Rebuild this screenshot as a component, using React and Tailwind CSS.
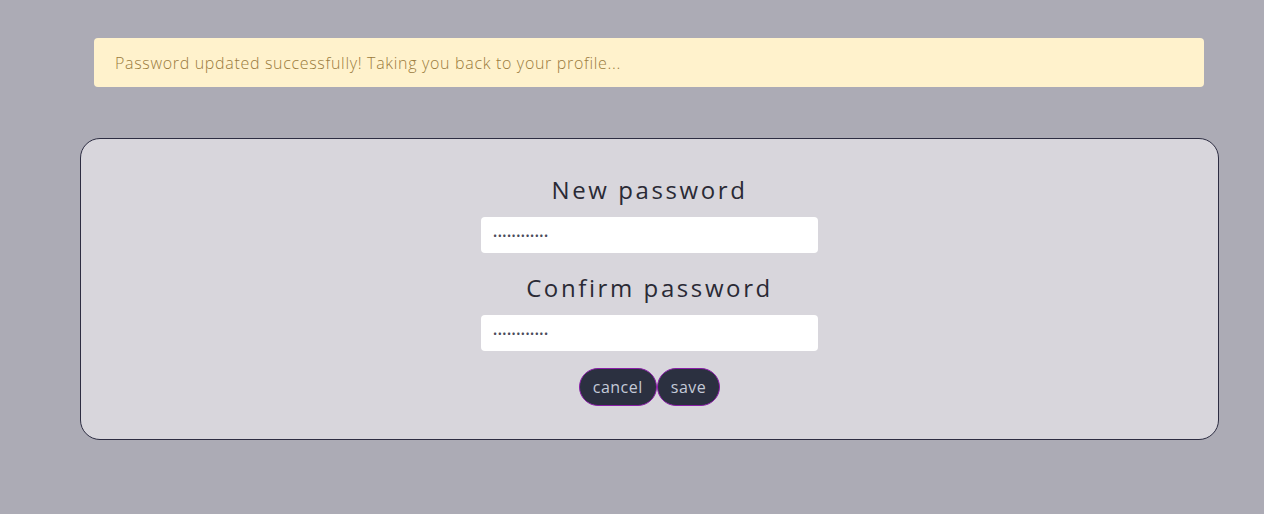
import React, { useState } from "react";

export default function App() {
  const [pw, setPw] = useState("123456789012");
  const [confirm, setConfirm] = useState("123456789012");

  return (
    <div className="min-h-[514px] bg-[#acabb5] pt-[38px] font-['Open_Sans',sans-serif]">
      {/* Alert */}
      <div className="mx-[94px] w-[1110px] h-[49px] rounded-[4px] bg-[#fff2cc] flex items-center px-[21px] text-[16px] font-light tracking-[0.68px] text-[#9a7b3c]">
        Password updated successfully! Taking you back to your profile...
      </div>

      {/* Card */}
      <div className="ml-[80px] mt-[51px] w-[1139px] h-[302px] rounded-[20px] border border-[#2d2d42] bg-[#d8d6dc] pt-[35px] flex flex-col items-center">
        <h2 className="h-[32px] leading-[32px] text-[24px] tracking-[2.6px] text-[#2a2a35]">New password</h2>
        <input
          type="password"
          value={pw}
          onChange={e => setPw(e.target.value)}
          className="mt-[11px] w-[337px] h-[36px] rounded-[4px] bg-white px-3 text-[11px] tracking-[0.5px] text-[#4a4a5a] outline-none"
        />
        <h2 className="mt-[19px] h-[32px] leading-[32px] text-[24px] tracking-[2.6px] text-[#2a2a35]">Confirm password</h2>
        <input
          type="password"
          value={confirm}
          onChange={e => setConfirm(e.target.value)}
          className="mt-[11px] w-[337px] h-[36px] rounded-[4px] bg-white px-3 text-[11px] tracking-[0.5px] text-[#4a4a5a] outline-none"
        />
        <div className="mt-[17px] flex">
          <button className="h-[38px] px-[13px] rounded-full border border-[#8a1fa8] bg-[#2b3040] text-[16px] tracking-[0.5px] text-[#c4cad8]">cancel</button>
          <button className="h-[38px] px-[13px] rounded-full border border-[#8a1fa8] bg-[#2b3040] text-[16px] tracking-[0.5px] text-[#c4cad8]">save</button>
        </div>
      </div>
    </div>
  );
}
